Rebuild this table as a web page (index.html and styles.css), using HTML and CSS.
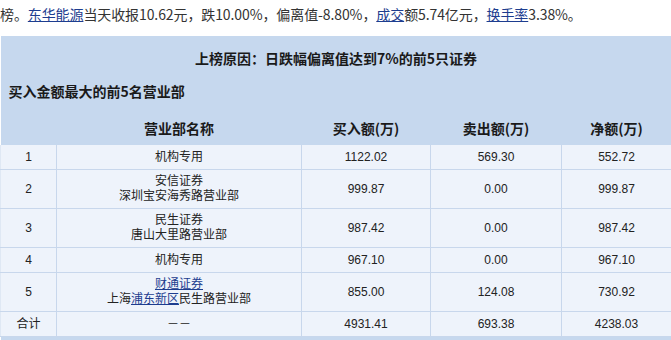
FILE: index.html
```html
<!doctype html>
<html>
<head>
<meta charset="utf-8">
<link rel="stylesheet" href="styles.css">
</head>
<body>
<p class="intro">榜。<a href="#">东华能源</a>当天收报10.62元，跌10.00%，偏离值-8.80%，<a href="#">成交</a>额5.74亿元，<a href="#">换手率</a>3.38%。</p>
<table class="lhb">
<colgroup>
<col class="c-no"><col class="c-name"><col class="c-buy"><col class="c-sell"><col class="c-net">
</colgroup>
<thead>
<tr><th colspan="5" class="title">上榜原因：日跌幅偏离值达到7%的前5只证券</th></tr>
<tr><th colspan="5" class="sub">买入金额最大的前5名营业部</th></tr>
<tr class="heads"><th></th><th>营业部名称</th><th>买入额(万)</th><th>卖出额(万)</th><th>净额(万)</th></tr>
</thead>
<tbody>
<tr><td>1</td><td>机构专用</td><td>1122.02</td><td>569.30</td><td>552.72</td></tr>
<tr class="two"><td>2</td><td>安信证券<br>深圳宝安海秀路营业部</td><td>999.87</td><td>0.00</td><td>999.87</td></tr>
<tr class="two"><td>3</td><td>民生证券<br>唐山大里路营业部</td><td>987.42</td><td>0.00</td><td>987.42</td></tr>
<tr><td>4</td><td>机构专用</td><td>967.10</td><td>0.00</td><td>967.10</td></tr>
<tr class="two"><td>5</td><td><a href="#">财通证券</a><br>上海<a href="#">浦东新区</a>民生路营业部</td><td>855.00</td><td>124.08</td><td>730.92</td></tr>
<tr><td>合计</td><td>－－</td><td>4931.41</td><td>693.38</td><td>4238.03</td></tr>
</tbody>
<tfoot>
<tr><td colspan="5" class="foot"></td></tr>
</tfoot>
</table>
</body>
</html>
```
FILE: styles.css
```css
body{
	margin:0;
	background:#fff;
	font-family:"Noto Sans CJK SC","Liberation Sans",sans-serif;
	color:#333;
}
a{
	color:#1d3d8f;
	text-decoration:underline;
}
.intro{
	margin:0 0 8px;
	font-size:14px;
	line-height:28px;
	white-space:nowrap;
	letter-spacing:-0.1px;
}
.lhb{
	width:671px;
	table-layout:fixed;
	border-collapse:collapse;
	font-size:12px;
}
.c-no{width:56px;}
.c-name{width:245px;}
.c-buy{width:129px;}
.c-sell{width:131px;}
.c-net{width:110px;}
.lhb thead th{
	background:#c6d8ee;
	color:#1a1a1a;
	font-size:14px;
	font-weight:700;
	line-height:16px;
	padding:0;
}
.lhb .title{
	padding:14px 0 8px;
	text-align:center;
}
.lhb .sub{
	padding:9px 0 9px 8px;
	text-align:left;
}
.lhb .heads th{
	padding:12px 0 9px;
	text-align:center;
}
.lhb tbody td{
	background:#eef3fb;
	border:1px solid #c8d7ec;
	border-top:0;
	padding:5px 0 4px;
	font-family:"Liberation Sans","Noto Sans CJK SC",sans-serif;
	line-height:15px;
	text-align:center;
	color:#222;
}
.lhb tbody .two td{
	padding:4px 0;
}
.lhb tbody td:first-child{
	border-left:1px solid #dfe8f4;
}
.lhb tbody td:last-child{
	border-right:1px solid #dfe8f4;
}
.lhb .foot{
	background:#c6d8ee;
	height:8px;
	padding:0;
}
```
